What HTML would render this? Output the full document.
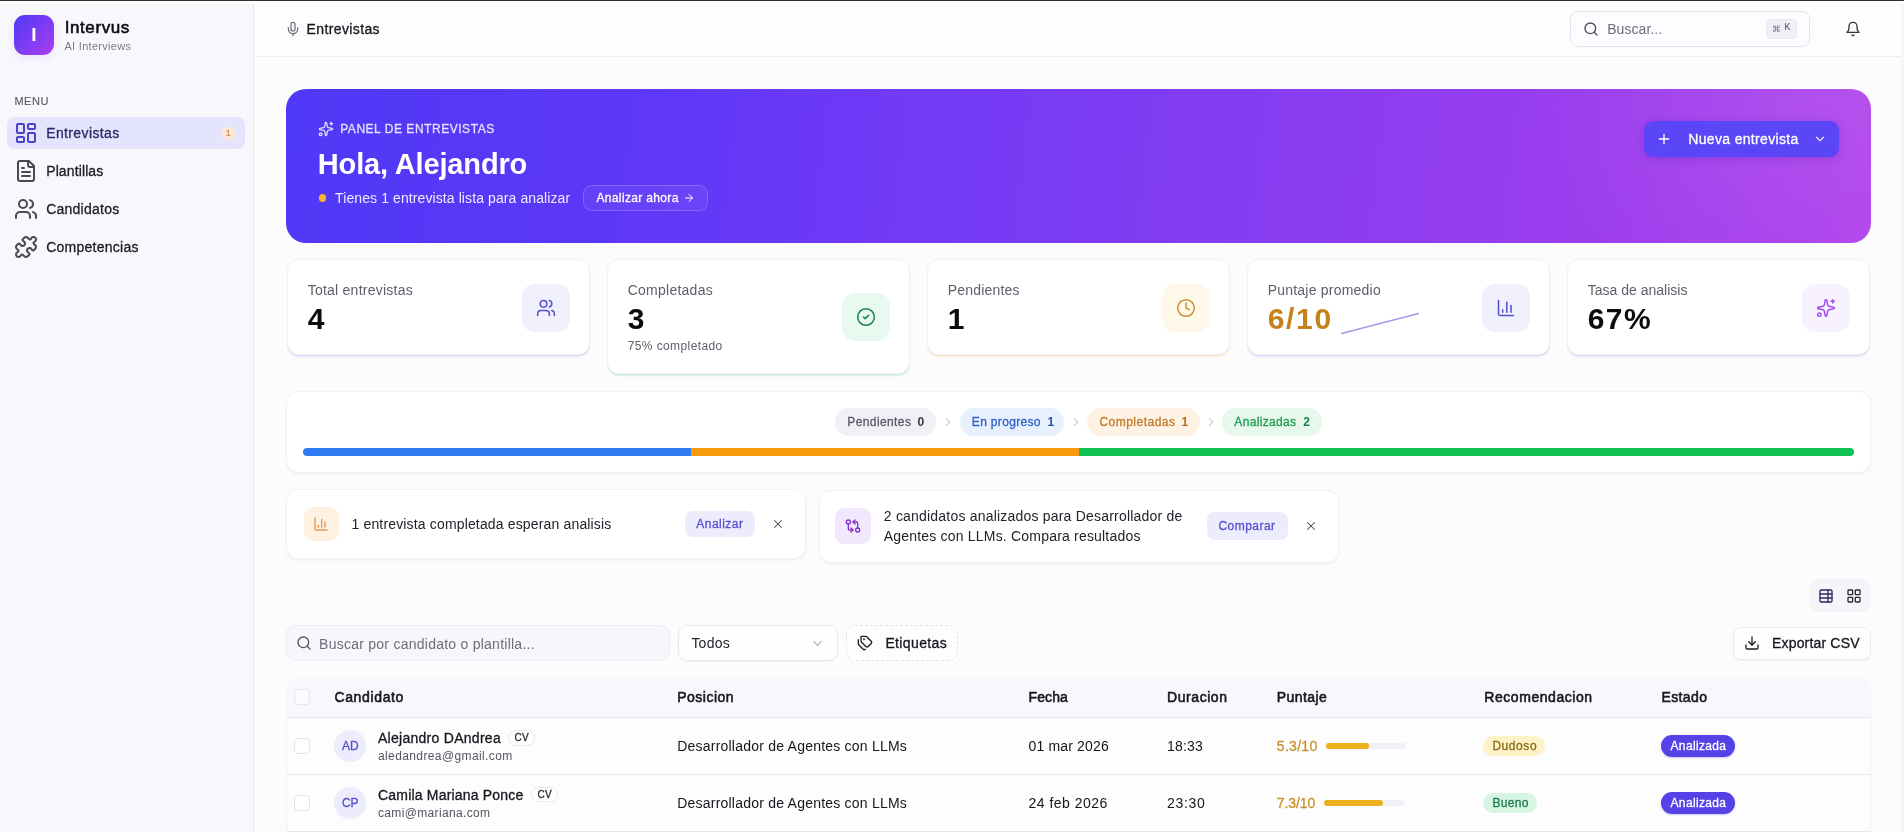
<!DOCTYPE html>
<html lang="es">
<head>
<meta charset="utf-8">
<title>Intervus - Entrevistas</title>
<style>
*{box-sizing:border-box;margin:0;padding:0}
html,body{width:1904px;height:832px;overflow:hidden}
body{font-family:"Liberation Sans",Arial,sans-serif;background:#fcfcfd;color:#111118;position:relative;font-size:14px}
.abs{position:absolute}
.t{position:absolute;white-space:nowrap;line-height:1}
#w{position:absolute;left:0;top:0;width:1904px;height:832px;will-change:transform}
svg.i{position:absolute;fill:none;stroke:currentColor;stroke-linecap:round;stroke-linejoin:round}
.card{position:absolute;background:#fff;border:1px solid #f1f1f6;border-radius:12px;box-shadow:0 1px 2px rgba(30,30,80,.045),0 2px 5px rgba(30,30,80,.025)}
</style>
</head>
<body>
<div id="w">
<div class="abs" style="left:0px;top:4px;width:254px;height:828px;background:#f8f8fc;border-right:1px solid #e8e8f1"></div>
<div class="abs" style="left:254px;top:4px;width:1650px;height:53px;background:#fdfdfe;border-bottom:1px solid #ececf3"></div>
<div class="abs" style="left:0px;top:0px;width:1904px;height:1px;background:#2e2e33"></div>
<div class="abs" style="left:0px;top:1px;width:1904px;height:3px;background:#ffffff"></div>
<div class="abs" style="left:1900.5px;top:4px;width:3.5px;height:828px;background:#f6f6f8"></div>
<!-- sidebar -->
<div class="abs" style="left:14px;top:15px;width:40px;height:40px;border-radius:11px;background:linear-gradient(135deg,#4f39f6 0%,#7c3cf3 50%,#aa3df0 100%);box-shadow:0 3px 8px rgba(124,58,237,.10)"></div>
<div class="t" style="left:31.3px;top:24.89px;font-size:19px;color:#fff;font-weight:700;">I</div>
<div class="t" style="left:64.7px;top:19.27px;font-size:17px;color:#0b0b10;-webkit-text-stroke:.55px currentColor;letter-spacing:0.590px;">Intervus</div>
<div class="t" style="left:64.5px;top:40.91px;font-size:11px;color:#7b7b88;letter-spacing:0.286px;">AI Interviews</div>
<div class="t" style="left:14.4px;top:95.61px;font-size:11px;color:#5c5c69;-webkit-text-stroke:.15px currentColor;letter-spacing:0.537px;">MENU</div>
<div class="abs" style="left:6.5px;top:117px;width:238.5px;height:32px;border-radius:8px;background:#e4e5fd"></div>
<svg class="i" style="left:14.0px;top:121.0px;color:#4b42c9;stroke-width:2" width="24" height="24" viewBox="0 0 24 24"><rect width="7" height="9" x="3" y="3" rx="1"/><rect width="7" height="5" x="14" y="3" rx="1"/><rect width="7" height="9" x="14" y="12" rx="1"/><rect width="7" height="5" x="3" y="16" rx="1"/></svg>
<div class="t" style="left:46.2px;top:126.14px;font-size:14px;color:#2a2969;-webkit-text-stroke:.3px currentColor;letter-spacing:0.375px;">Entrevistas</div>
<div class="abs" style="left:221px;top:127px;width:15px;height:12.5px;border-radius:7px;background:#fbe8db"></div>
<div class="t" style="left:225.7px;top:128.79px;font-size:9px;color:#d8905d;font-weight:700;">1</div>
<svg class="i" style="left:14.0px;top:159.0px;color:#494955;stroke-width:2" width="24" height="24" viewBox="0 0 24 24"><path d="M15 2H6a2 2 0 0 0-2 2v16a2 2 0 0 0 2 2h12a2 2 0 0 0 2-2V7Z"/><path d="M14 2v4a2 2 0 0 0 2 2h4"/><path d="M10 9H8"/><path d="M16 13H8"/><path d="M16 17H8"/></svg>
<div class="t" style="left:46.2px;top:164.14px;font-size:14px;color:#1c1c25;-webkit-text-stroke:.3px currentColor;letter-spacing:0.118px;">Plantillas</div>
<svg class="i" style="left:14.0px;top:197.0px;color:#494955;stroke-width:2" width="24" height="24" viewBox="0 0 24 24"><path d="M16 21v-2a4 4 0 0 0-4-4H6a4 4 0 0 0-4 4v2"/><circle cx="9" cy="7" r="4"/><path d="M22 21v-2a4 4 0 0 0-3-3.87"/><path d="M16 3.13a4 4 0 0 1 0 7.75"/></svg>
<div class="t" style="left:46.2px;top:202.14px;font-size:14px;color:#1c1c25;-webkit-text-stroke:.3px currentColor;letter-spacing:0.240px;">Candidatos</div>
<svg class="i" style="left:14.0px;top:235.0px;color:#494955;stroke-width:2" width="24" height="24" viewBox="0 0 24 24"><path d="M19.439 7.85c-.049.322.059.648.289.878l1.568 1.568c.47.47.706 1.087.706 1.704s-.235 1.233-.706 1.704l-1.611 1.611a.98.98 0 0 1-.837.276c-.47-.07-.802-.48-.968-.925a2.501 2.501 0 1 0-3.214 3.214c.446.166.855.497.925.968a.979.979 0 0 1-.276.837l-1.61 1.61a2.404 2.404 0 0 1-1.705.707 2.402 2.402 0 0 1-1.704-.706l-1.568-1.568a1.026 1.026 0 0 0-.877-.29c-.493.074-.84.504-1.02.968a2.5 2.5 0 1 1-3.237-3.237c.464-.18.894-.527.967-1.02a1.026 1.026 0 0 0-.289-.877l-1.568-1.568A2.402 2.402 0 0 1 1.998 12c0-.617.236-1.234.706-1.704L4.23 8.77c.24-.24.581-.353.917-.303.515.077.877.528 1.073 1.01a2.5 2.5 0 1 0 3.259-3.259c-.482-.196-.933-.558-1.01-1.073-.05-.336.062-.676.303-.917l1.525-1.525A2.402 2.402 0 0 1 12 1.998c.617 0 1.234.236 1.704.706l1.568 1.568c.23.23.556.338.877.29.493-.074.84-.504 1.02-.968a2.5 2.5 0 1 1 3.237 3.237c-.464.18-.894.527-.967 1.02Z"/></svg>
<div class="t" style="left:46.2px;top:240.14px;font-size:14px;color:#1c1c25;-webkit-text-stroke:.3px currentColor;letter-spacing:0.255px;">Competencias</div>
<!-- header -->
<svg class="i" style="left:285.0px;top:21.0px;color:#6b6b78;stroke-width:1.8" width="16" height="16" viewBox="0 0 24 24"><path d="M12 2a3 3 0 0 0-3 3v7a3 3 0 0 0 6 0V5a3 3 0 0 0-3-3Z"/><path d="M19 10v2a7 7 0 0 1-14 0v-2"/><line x1="12" x2="12" y1="19" y2="22"/></svg>
<div class="t" style="left:306.6px;top:22.14px;font-size:14px;color:#15151c;-webkit-text-stroke:.3px currentColor;letter-spacing:0.375px;">Entrevistas</div>
<div class="abs" style="left:1570px;top:11px;width:240px;height:35.5px;border:1px solid #e4e4ee;border-radius:8px;background:#fdfdff"></div>
<svg class="i" style="left:1583.0px;top:21.2px;color:#4a4a57;stroke-width:2" width="16" height="16" viewBox="0 0 24 24"><circle cx="11" cy="11" r="8"/><path d="m21 21-4.3-4.3"/></svg>
<div class="t" style="left:1607.2px;top:22.34px;font-size:14px;color:#6f6f7c;letter-spacing:0.066px;">Buscar...</div>
<div class="abs" style="left:1766.3px;top:19px;width:30.5px;height:19.5px;border-radius:4px;background:#efeff7;border:1px solid #e8e8f1"></div>
<div class="t" style="left:1772px;top:24.5px;font-size:8.5px;color:#6a6a78;font-family:'DejaVu Sans','Liberation Sans',sans-serif">⌘</div>
<div class="t" style="left:1784.2px;top:23.40px;font-size:10px;color:#6a6a78;-webkit-text-stroke:.15px currentColor;font-family:'Liberation Mono',monospace;">K</div>
<svg class="i" style="left:1845.0px;top:21.0px;color:#33333d;stroke-width:2" width="16" height="16" viewBox="0 0 24 24"><path d="M6 8a6 6 0 0 1 12 0c0 7 3 9 3 9H3s3-2 3-9"/><path d="M10.3 21a1.94 1.94 0 0 0 3.4 0"/></svg>
<!-- banner -->
<div class="abs" style="left:286px;top:89px;width:1585px;height:153.8px;border-radius:20px;background:radial-gradient(ellipse 300px 220px at 97% 8%,rgba(255,255,255,.08),rgba(255,255,255,0) 100%),linear-gradient(97deg,rgb(79,57,246) 0%,rgb(93,55,248) 21%,rgb(113,58,246) 38.7%,rgb(138,61,240) 65.2%,rgb(156,62,238) 82.9%,rgb(172,66,236) 97%,rgb(178,68,235) 100%)"></div>
<svg class="i" style="left:318.0px;top:121.0px;color:rgba(255,255,255,.82);stroke-width:2" width="16" height="16" viewBox="0 0 24 24"><path d="M11.017 2.814a1 1 0 0 1 1.966 0l1.051 5.558a2 2 0 0 0 1.594 1.594l5.558 1.051a1 1 0 0 1 0 1.966l-5.558 1.051a2 2 0 0 0-1.594 1.594l-1.051 5.558a1 1 0 0 1-1.966 0l-1.051-5.558a2 2 0 0 0-1.594-1.594l-5.558-1.051a1 1 0 0 1 0-1.966l5.558-1.051a2 2 0 0 0 1.594-1.594z"/><path d="M20 2v4"/><path d="M22 4h-4"/><circle cx="4" cy="20" r="2"/></svg>
<div class="t" style="left:340.2px;top:122.62px;font-size:12px;color:rgba(255,255,255,.78);-webkit-text-stroke:.3px currentColor;letter-spacing:0.536px;">PANEL DE ENTREVISTAS</div>
<div class="t" style="left:317.8px;top:150.39px;font-size:29px;color:#fff;font-weight:700;letter-spacing:-0.152px;">Hola, Alejandro</div>
<div class="abs" style="left:318.6px;top:194.3px;width:7.6px;height:7.6px;border-radius:50%;background:#fbb42c"></div>
<div class="t" style="left:335.1px;top:191.14px;font-size:14px;color:rgba(255,255,255,.9);letter-spacing:0.095px;">Tienes 1 entrevista lista para analizar</div>
<div class="abs" style="left:582.8px;top:185.2px;width:125.4px;height:26px;border:1px solid rgba(255,255,255,.2);border-radius:9px;background:rgba(255,255,255,.05)"></div>
<div class="t" style="left:596.5px;top:192.12px;font-size:12px;color:#fff;-webkit-text-stroke:.3px currentColor;letter-spacing:0.340px;">Analizar ahora</div>
<svg class="i" style="left:682.8px;top:192.3px;color:#fff;stroke-width:2" width="12" height="12" viewBox="0 0 24 24"><path d="M5 12h14"/><path d="m12 5 7 7-7 7"/></svg>
<div class="abs" style="left:1644px;top:121px;width:195px;height:36px;border-radius:9px;background:#5a46f7;box-shadow:0 2px 8px rgba(50,20,150,.22)"></div>
<svg class="i" style="left:1656.0px;top:131.0px;color:#fff;stroke-width:2" width="16" height="16" viewBox="0 0 24 24"><path d="M5 12h14"/><path d="M12 5v14"/></svg>
<div class="t" style="left:1688.3px;top:132.14px;font-size:14px;color:#fff;-webkit-text-stroke:.3px currentColor;letter-spacing:0.329px;">Nueva entrevista</div>
<svg class="i" style="left:1813.2px;top:132.3px;color:rgba(255,255,255,.85);stroke-width:2" width="14" height="14" viewBox="0 0 24 24"><path d="m6 9 6 6 6-6"/></svg>
<!-- stats -->
<div class="card" style="left:287px;top:259.3px;width:303px;height:96px;box-shadow:0 1.5px 0 rgba(99,102,241,.10),0 3px 3px -1px rgba(99,102,241,.10),0 1px 2px rgba(30,30,80,.04)"></div>
<div class="t" style="left:307.7px;top:283.14px;font-size:14px;color:#5e5e6b;letter-spacing:0.239px;">Total entrevistas</div>
<div class="t" style="left:307.7px;top:303.70px;font-size:30px;color:#0b0b10;font-weight:700;">4</div>
<div class="abs" style="left:522px;top:284.2px;width:47.5px;height:47.5px;border-radius:13px;background:#f0effc"></div>
<svg class="i" style="left:535.7px;top:298.0px;color:#5a4fc8;stroke-width:1.85" width="20" height="20" viewBox="0 0 24 24"><path d="M16 21v-2a4 4 0 0 0-4-4H6a4 4 0 0 0-4 4v2"/><circle cx="9" cy="7" r="4"/><path d="M22 21v-2a4 4 0 0 0-3-3.87"/><path d="M16 3.13a4 4 0 0 1 0 7.75"/></svg>
<div class="card" style="left:607px;top:259.3px;width:303px;height:115px;box-shadow:0 1.5px 0 rgba(34,197,94,.11),0 3px 3px -1px rgba(34,197,94,.11),0 1px 2px rgba(30,30,80,.04)"></div>
<div class="t" style="left:627.7px;top:283.14px;font-size:14px;color:#5e5e6b;letter-spacing:0.250px;">Completadas</div>
<div class="t" style="left:627.7px;top:303.70px;font-size:30px;color:#0b0b10;font-weight:700;">3</div>
<div class="abs" style="left:842px;top:293.2px;width:47.5px;height:47.5px;border-radius:13px;background:#e8f9ef"></div>
<svg class="i" style="left:855.7px;top:307.0px;color:#19854b;stroke-width:1.85" width="20" height="20" viewBox="0 0 24 24"><circle cx="12" cy="12" r="10"/><path d="m9 12 2 2 4-4"/></svg>
<div class="t" style="left:627.7px;top:340.02px;font-size:12px;color:#60606c;letter-spacing:0.401px;">75% completado</div>
<div class="card" style="left:927px;top:259.3px;width:303px;height:96px;box-shadow:0 1.5px 0 rgba(245,180,40,.12),0 3px 3px -1px rgba(245,180,40,.12),0 1px 2px rgba(30,30,80,.04)"></div>
<div class="t" style="left:947.7px;top:283.14px;font-size:14px;color:#5e5e6b;letter-spacing:0.193px;">Pendientes</div>
<div class="t" style="left:947.7px;top:303.70px;font-size:30px;color:#0b0b10;font-weight:700;">1</div>
<div class="abs" style="left:1162px;top:284.2px;width:47.5px;height:47.5px;border-radius:13px;background:#fdf8e8"></div>
<svg class="i" style="left:1175.7px;top:298.0px;color:#c7933a;stroke-width:1.85" width="20" height="20" viewBox="0 0 24 24"><circle cx="12" cy="12" r="10"/><polyline points="12 6 12 12 16 14"/></svg>
<div class="card" style="left:1247px;top:259.3px;width:303px;height:96px;box-shadow:0 1.5px 0 rgba(99,102,241,.10),0 3px 3px -1px rgba(99,102,241,.10),0 1px 2px rgba(30,30,80,.04)"></div>
<div class="t" style="left:1267.7px;top:283.14px;font-size:14px;color:#5e5e6b;letter-spacing:0.217px;">Puntaje promedio</div>
<div class="t" style="left:1267.7px;top:303.70px;font-size:30px;color:#c5811a;font-weight:700;letter-spacing:1.669px;">6/10</div>
<div class="abs" style="left:1482px;top:284.2px;width:47.5px;height:47.5px;border-radius:13px;background:#f0effc"></div>
<svg class="i" style="left:1495.7px;top:298.0px;color:#5a4fc8;stroke-width:1.85" width="20" height="20" viewBox="0 0 24 24"><path d="M3 3v16a2 2 0 0 0 2 2h16"/><path d="M18 17V9"/><path d="M13 17V5"/><path d="M8 17v-3"/></svg>
<svg class="abs" style="left:1336px;top:308px" width="90" height="30" viewBox="0 0 90 30"><path d="M5.5 25.4 L82.5 5.6" fill="none" stroke="#a39be9" stroke-width="1.5" stroke-linecap="round"/></svg>
<div class="card" style="left:1567px;top:259.3px;width:303px;height:96px;box-shadow:0 1.5px 0 rgba(140,100,245,.10),0 3px 3px -1px rgba(140,100,245,.10),0 1px 2px rgba(30,30,80,.04)"></div>
<div class="t" style="left:1587.7px;top:283.14px;font-size:14px;color:#5e5e6b;letter-spacing:0.012px;">Tasa de analisis</div>
<div class="t" style="left:1587.7px;top:303.70px;font-size:30px;color:#0b0b10;font-weight:700;letter-spacing:1.477px;">67%</div>
<div class="abs" style="left:1802px;top:284.2px;width:47.5px;height:47.5px;border-radius:13px;background:#f8f1fe"></div>
<svg class="i" style="left:1815.7px;top:298.0px;color:#a24ff0;stroke-width:1.85" width="20" height="20" viewBox="0 0 24 24"><path d="M11.017 2.814a1 1 0 0 1 1.966 0l1.051 5.558a2 2 0 0 0 1.594 1.594l5.558 1.051a1 1 0 0 1 0 1.966l-5.558 1.051a2 2 0 0 0-1.594 1.594l-1.051 5.558a1 1 0 0 1-1.966 0l-1.051-5.558a2 2 0 0 0-1.594-1.594l-5.558-1.051a1 1 0 0 1 0-1.966l5.558-1.051a2 2 0 0 0 1.594-1.594z"/><path d="M20 2v4"/><path d="M22 4h-4"/><circle cx="4" cy="20" r="2"/></svg>
<!-- pipeline -->
<div class="card" style="left:286px;top:391.2px;width:1585px;height:81.6px"></div>
<div class="abs" style="left:835.3px;top:408.2px;width:101.20000000000005px;height:27.8px;border-radius:14px;background:#f0f0f7"></div>
<div class="t" style="left:847.3px;top:415.72px;font-size:12px;color:#5b5b68;-webkit-text-stroke:.3px currentColor;letter-spacing:0.395px;">Pendientes</div>
<div class="t" style="left:917.4px;top:415.72px;font-size:12px;color:#3b3b46;font-weight:700;">0</div>
<svg class="i" style="left:940.8px;top:415.0px;color:#bcbcc9;stroke-width:1.8" width="14" height="14" viewBox="0 0 24 24"><path d="m9 18 6-6-6-6"/></svg>
<div class="abs" style="left:959.8px;top:408.2px;width:104.29999999999995px;height:27.8px;border-radius:14px;background:#e7f0fd"></div>
<div class="t" style="left:971.8px;top:415.72px;font-size:12px;color:#2d5fc6;-webkit-text-stroke:.3px currentColor;letter-spacing:0.333px;">En progreso</div>
<div class="t" style="left:1047.6px;top:415.72px;font-size:12px;color:#2453b8;font-weight:700;">1</div>
<svg class="i" style="left:1068.8px;top:415.0px;color:#bcbcc9;stroke-width:1.8" width="14" height="14" viewBox="0 0 24 24"><path d="m9 18 6-6-6-6"/></svg>
<div class="abs" style="left:1087.4px;top:408.2px;width:112.19999999999982px;height:27.8px;border-radius:14px;background:#fdf2e3"></div>
<div class="t" style="left:1099.4px;top:415.72px;font-size:12px;color:#c27b2c;-webkit-text-stroke:.3px currentColor;letter-spacing:0.489px;">Completadas</div>
<div class="t" style="left:1181.6px;top:415.72px;font-size:12px;color:#b46e22;font-weight:700;">1</div>
<svg class="i" style="left:1204.3px;top:415.0px;color:#bcbcc9;stroke-width:1.8" width="14" height="14" viewBox="0 0 24 24"><path d="m9 18 6-6-6-6"/></svg>
<div class="abs" style="left:1222.3px;top:408.2px;width:99.29999999999995px;height:27.8px;border-radius:14px;background:#e6f7ec"></div>
<div class="t" style="left:1234.3px;top:415.72px;font-size:12px;color:#1f9a51;-webkit-text-stroke:.3px currentColor;letter-spacing:0.333px;">Analizadas</div>
<div class="t" style="left:1303.2px;top:415.72px;font-size:12px;color:#178445;font-weight:700;">2</div>
<div class="abs" style="left:303px;top:448px;width:1551px;height:8px;border-radius:4px;background:linear-gradient(90deg,#2f7cf2 0,#2f7cf2 388px,#f79a0e 388px,#f79a0e 776px,#12c153 776px,#12c153 100%)"></div>
<!-- alerts -->
<div class="card" style="left:286px;top:489px;width:519.5px;height:69.5px"></div>
<div class="abs" style="left:304px;top:506.5px;width:34.5px;height:34.5px;border-radius:9px;background:#fef1e2"></div>
<svg class="i" style="left:313.2px;top:516.0px;color:#e2974a;stroke-width:2" width="16" height="16" viewBox="0 0 24 24"><path d="M3 3v16a2 2 0 0 0 2 2h16"/><path d="M18 17V9"/><path d="M13 17V5"/><path d="M8 17v-3"/></svg>
<div class="t" style="left:351.5px;top:517.04px;font-size:14px;color:#22222b;letter-spacing:0.156px;">1 entrevista completada esperan analisis</div>
<div class="abs" style="left:685px;top:510.8px;width:69.7px;height:26.2px;border-radius:8px;background:#edecfd"></div>
<div class="t" style="left:696.3px;top:518.02px;font-size:12px;color:#5a4fd0;-webkit-text-stroke:.3px currentColor;letter-spacing:0.478px;">Analizar</div>
<svg class="i" style="left:771.0px;top:517.0px;color:#4a4a55;stroke-width:1.8" width="14" height="14" viewBox="0 0 24 24"><path d="M18 6 6 18"/><path d="m6 6 12 12"/></svg>
<div class="card" style="left:818.5px;top:489.5px;width:520px;height:73px"></div>
<div class="abs" style="left:835.3px;top:508.3px;width:35.6px;height:35.6px;border-radius:9px;background:#f1e8fd"></div>
<svg class="i" style="left:845.1px;top:518.1px;color:#8a2fc9;stroke-width:2" width="16" height="16" viewBox="0 0 24 24"><circle cx="5" cy="6" r="3"/><path d="M12 6h5a2 2 0 0 1 2 2v7"/><path d="m15 9-3-3 3-3"/><circle cx="19" cy="18" r="3"/><path d="M12 18H7a2 2 0 0 1-2-2V9"/><path d="m9 15 3 3-3 3"/></svg>
<div class="t" style="left:883.8px;top:508.94px;font-size:14px;color:#22222b;letter-spacing:0.203px;">2 candidatos analizados para Desarrollador de</div>
<div class="t" style="left:883.8px;top:529.14px;font-size:14px;color:#22222b;letter-spacing:0.194px;">Agentes con LLMs. Compara resultados</div>
<div class="abs" style="left:1206.6px;top:512.4px;width:81.3px;height:27.4px;border-radius:8px;background:#edecfd"></div>
<div class="t" style="left:1218.5px;top:520.22px;font-size:12px;color:#5a4fd0;-webkit-text-stroke:.3px currentColor;letter-spacing:0.450px;">Comparar</div>
<svg class="i" style="left:1304.0px;top:519.1px;color:#4a4a55;stroke-width:1.8" width="14" height="14" viewBox="0 0 24 24"><path d="M18 6 6 18"/><path d="m6 6 12 12"/></svg>
<!-- toolbar -->
<div class="abs" style="left:1809.8px;top:578.8px;width:60.6px;height:33.6px;border-radius:8px;background:#f4f4fa"></div>
<svg class="i" style="left:1817.8px;top:587.8px;color:#2e2a5c;stroke-width:2" width="16" height="16" viewBox="0 0 24 24"><path d="M15 3v18"/><rect width="18" height="18" x="3" y="3" rx="2"/><path d="M3 9h18"/><path d="M3 15h18"/></svg>
<svg class="i" style="left:1846.0px;top:587.8px;color:#2a2a35;stroke-width:2" width="16" height="16" viewBox="0 0 24 24"><rect width="7" height="7" x="3" y="3" rx="1"/><rect width="7" height="7" x="14" y="3" rx="1"/><rect width="7" height="7" x="14" y="14" rx="1"/><rect width="7" height="7" x="3" y="14" rx="1"/></svg>
<div class="abs" style="left:286px;top:625px;width:384px;height:36.4px;border-radius:9px;background:#f6f6fb;border:1px solid #ededf5"></div>
<svg class="i" style="left:296.0px;top:635.0px;color:#55555f;stroke-width:2" width="16" height="16" viewBox="0 0 24 24"><circle cx="11" cy="11" r="8"/><path d="m21 21-4.3-4.3"/></svg>
<div class="t" style="left:319.1px;top:636.64px;font-size:14px;color:#6e6e7b;letter-spacing:0.249px;">Buscar por candidato o plantilla...</div>
<div class="abs" style="left:678.4px;top:625px;width:159.2px;height:36.4px;border-radius:9px;background:#fefeff;border:1px solid #e9e9f1;box-shadow:0 1px 2px rgba(20,20,60,.035)"></div>
<div class="t" style="left:691.4px;top:636.14px;font-size:14px;color:#22222b;letter-spacing:0.234px;">Todos</div>
<svg class="i" style="left:809.5px;top:636.1px;color:#b0b0bc;stroke-width:2" width="15" height="15" viewBox="0 0 24 24"><path d="m6 9 6 6 6-6"/></svg>
<div class="abs" style="left:846px;top:625px;width:112.3px;height:36.4px;border-radius:9px;background:#fdfdfe;border:1px dashed #e2e2ec"></div>
<svg class="i" style="left:857.3px;top:635.0px;color:#1c1c25;stroke-width:2" width="16" height="16" viewBox="0 0 24 24"><path d="M13.172 2a2 2 0 0 1 1.414.586l6.71 6.71a2.4 2.4 0 0 1 0 3.408l-4.592 4.592a2.4 2.4 0 0 1-3.408 0l-6.71-6.71A2 2 0 0 1 6 9.172V3a1 1 0 0 1 1-1z"/><path d="M2 7v6.172a2 2 0 0 0 .586 1.414l6.71 6.71a2.4 2.4 0 0 0 3.191.193"/><circle cx="10.5" cy="6.5" r=".5" fill="currentColor"/></svg>
<div class="t" style="left:885.4px;top:636.14px;font-size:14px;color:#15151c;-webkit-text-stroke:.3px currentColor;letter-spacing:0.378px;">Etiquetas</div>
<div class="abs" style="left:1733.3px;top:626.5px;width:137.5px;height:33px;border-radius:8px;background:#fefeff;border:1px solid #e9e9f1;box-shadow:0 1px 2px rgba(20,20,60,.04)"></div>
<svg class="i" style="left:1744.0px;top:635.0px;color:#1c1c25;stroke-width:2" width="16" height="16" viewBox="0 0 24 24"><path d="M21 15v4a2 2 0 0 1-2 2H5a2 2 0 0 1-2-2v-4"/><polyline points="7 10 12 15 17 10"/><line x1="12" x2="12" y1="15" y2="3"/></svg>
<div class="t" style="left:1772.0px;top:636.14px;font-size:14px;color:#15151c;-webkit-text-stroke:.3px currentColor;letter-spacing:0.173px;">Exportar CSV</div>
<!-- table -->
<div class="abs" style="left:286px;top:677.5px;width:1585px;height:160px;border-radius:12px 12px 0 0;background:#fdfdfe;border:1px solid #eeeef5;border-bottom:none"></div>
<div class="abs" style="left:286px;top:677.5px;width:1585px;height:40px;border-radius:12px 12px 0 0;background:#f7f7fc;border-bottom:1px solid #e6e6f0"></div>
<div class="abs" style="left:286px;top:774px;width:1585px;height:1px;background:#e8e8ef"></div>
<div class="abs" style="left:286px;top:831px;width:1585px;height:1px;background:#e6e6f0"></div>
<div class="abs" style="left:294.3px;top:689.4px;width:16px;height:16px;border-radius:4px;background:rgba(255,255,255,.55);border:1px solid #e4e4ec"></div>
<div class="t" style="left:334.4px;top:690.04px;font-size:14px;color:#15151c;-webkit-text-stroke:.55px currentColor;letter-spacing:0.646px;">Candidato</div>
<div class="t" style="left:677.2px;top:690.04px;font-size:14px;color:#15151c;-webkit-text-stroke:.55px currentColor;letter-spacing:0.497px;">Posicion</div>
<div class="t" style="left:1028.5px;top:690.04px;font-size:14px;color:#15151c;-webkit-text-stroke:.55px currentColor;letter-spacing:0.121px;">Fecha</div>
<div class="t" style="left:1167.1px;top:690.04px;font-size:14px;color:#15151c;-webkit-text-stroke:.55px currentColor;letter-spacing:0.552px;">Duracion</div>
<div class="t" style="left:1276.8px;top:690.04px;font-size:14px;color:#15151c;-webkit-text-stroke:.55px currentColor;letter-spacing:0.402px;">Puntaje</div>
<div class="t" style="left:1484.3px;top:690.04px;font-size:14px;color:#15151c;-webkit-text-stroke:.55px currentColor;letter-spacing:0.552px;">Recomendacion</div>
<div class="t" style="left:1661.4px;top:690.04px;font-size:14px;color:#15151c;-webkit-text-stroke:.55px currentColor;letter-spacing:0.402px;">Estado</div>
<div class="abs" style="left:294.3px;top:737.9px;width:16px;height:16px;border-radius:4px;background:#fff;border:1px solid #e2e2eb"></div>
<div class="abs" style="left:334px;top:729.9px;width:32px;height:32px;border-radius:50%;background:#edecfc"></div>
<div class="t" style="left:341.9px;top:740.02px;font-size:12px;color:#5a4fd0;-webkit-text-stroke:.3px currentColor;">AD</div>
<div class="t" style="left:378.0px;top:731.04px;font-size:14px;color:#15151c;-webkit-text-stroke:.3px currentColor;letter-spacing:0.274px;">Alejandro DAndrea</div>
<div class="abs" style="left:507.7px;top:730.1999999999999px;width:27.6px;height:15.4px;border-radius:8px;background:#fff;border:1px solid #e8e8f0"></div>
<div class="t" style="left:514.6px;top:733.10px;font-size:10px;color:#2a2a35;-webkit-text-stroke:.3px currentColor;letter-spacing:0.307px;">CV</div>
<div class="t" style="left:378.0px;top:750.02px;font-size:12px;color:#55555f;letter-spacing:0.383px;">aledandrea@gmail.com</div>
<div class="t" style="left:677.2px;top:739.04px;font-size:14px;color:#15151c;letter-spacing:0.222px;">Desarrollador de Agentes con LLMs</div>
<div class="t" style="left:1028.5px;top:739.04px;font-size:14px;color:#15151c;letter-spacing:0.158px;">01 mar 2026</div>
<div class="t" style="left:1167.1px;top:739.04px;font-size:14px;color:#15151c;letter-spacing:0.165px;">18:33</div>
<div class="t" style="left:1276.8px;top:739.04px;font-size:14px;color:#c8922a;-webkit-text-stroke:.3px currentColor;letter-spacing:0.294px;">5.3/10</div>
<div class="abs" style="left:1326.2px;top:742.9px;width:80px;height:6.5px;border-radius:4px;background:#f0f0f6"></div>
<div class="abs" style="left:1326.2px;top:742.9px;width:43px;height:6.5px;border-radius:4px;background:#ecb01f"></div>
<div class="abs" style="left:1483.4px;top:736.4px;width:61.69999999999982px;height:19.5px;border-radius:10px;background:#fdf3c6"></div>
<div class="t" style="left:1492.4px;top:740.02px;font-size:12px;color:#8a6a1a;-webkit-text-stroke:.3px currentColor;letter-spacing:0.568px;">Dudoso</div>
<div class="abs" style="left:1661px;top:735.4px;width:74px;height:21.5px;border-radius:11px;background:#5442e6;box-shadow:0 1px 2px rgba(60,40,200,.25)"></div>
<div class="t" style="left:1670.5px;top:740.02px;font-size:12px;color:#fff;-webkit-text-stroke:.3px currentColor;letter-spacing:0.349px;">Analizada</div>
<div class="abs" style="left:294.3px;top:794.8px;width:16px;height:16px;border-radius:4px;background:#fff;border:1px solid #e2e2eb"></div>
<div class="abs" style="left:334px;top:786.8px;width:32px;height:32px;border-radius:50%;background:#edecfc"></div>
<div class="t" style="left:341.9px;top:796.92px;font-size:12px;color:#5a4fd0;-webkit-text-stroke:.3px currentColor;">CP</div>
<div class="t" style="left:378.0px;top:787.94px;font-size:14px;color:#15151c;-webkit-text-stroke:.3px currentColor;letter-spacing:0.193px;">Camila Mariana Ponce</div>
<div class="abs" style="left:530.7px;top:787.0999999999999px;width:27.6px;height:15.4px;border-radius:8px;background:#fff;border:1px solid #e8e8f0"></div>
<div class="t" style="left:537.6px;top:790.00px;font-size:10px;color:#2a2a35;-webkit-text-stroke:.3px currentColor;letter-spacing:0.307px;">CV</div>
<div class="t" style="left:378.0px;top:806.92px;font-size:12px;color:#55555f;letter-spacing:0.342px;">cami@mariana.com</div>
<div class="t" style="left:677.2px;top:795.94px;font-size:14px;color:#15151c;letter-spacing:0.222px;">Desarrollador de Agentes con LLMs</div>
<div class="t" style="left:1028.5px;top:795.94px;font-size:14px;color:#15151c;letter-spacing:0.483px;">24 feb 2026</div>
<div class="t" style="left:1167.1px;top:795.94px;font-size:14px;color:#15151c;letter-spacing:0.640px;">23:30</div>
<div class="t" style="left:1276.8px;top:795.94px;font-size:14px;color:#c8922a;-webkit-text-stroke:.3px currentColor;letter-spacing:-0.086px;">7.3/10</div>
<div class="abs" style="left:1324.3px;top:799.8px;width:80px;height:6.5px;border-radius:4px;background:#f0f0f6"></div>
<div class="abs" style="left:1324.3px;top:799.8px;width:58.5px;height:6.5px;border-radius:4px;background:#ecb01f"></div>
<div class="abs" style="left:1483.4px;top:793.3px;width:53.19999999999982px;height:19.5px;border-radius:10px;background:#d6f6e3"></div>
<div class="t" style="left:1492.4px;top:796.92px;font-size:12px;color:#1f7a4a;-webkit-text-stroke:.3px currentColor;letter-spacing:0.350px;">Bueno</div>
<div class="abs" style="left:1661px;top:792.3px;width:74px;height:21.5px;border-radius:11px;background:#5442e6;box-shadow:0 1px 2px rgba(60,40,200,.25)"></div>
<div class="t" style="left:1670.5px;top:796.92px;font-size:12px;color:#fff;-webkit-text-stroke:.3px currentColor;letter-spacing:0.349px;">Analizada</div>
</div>
</body>
</html>
